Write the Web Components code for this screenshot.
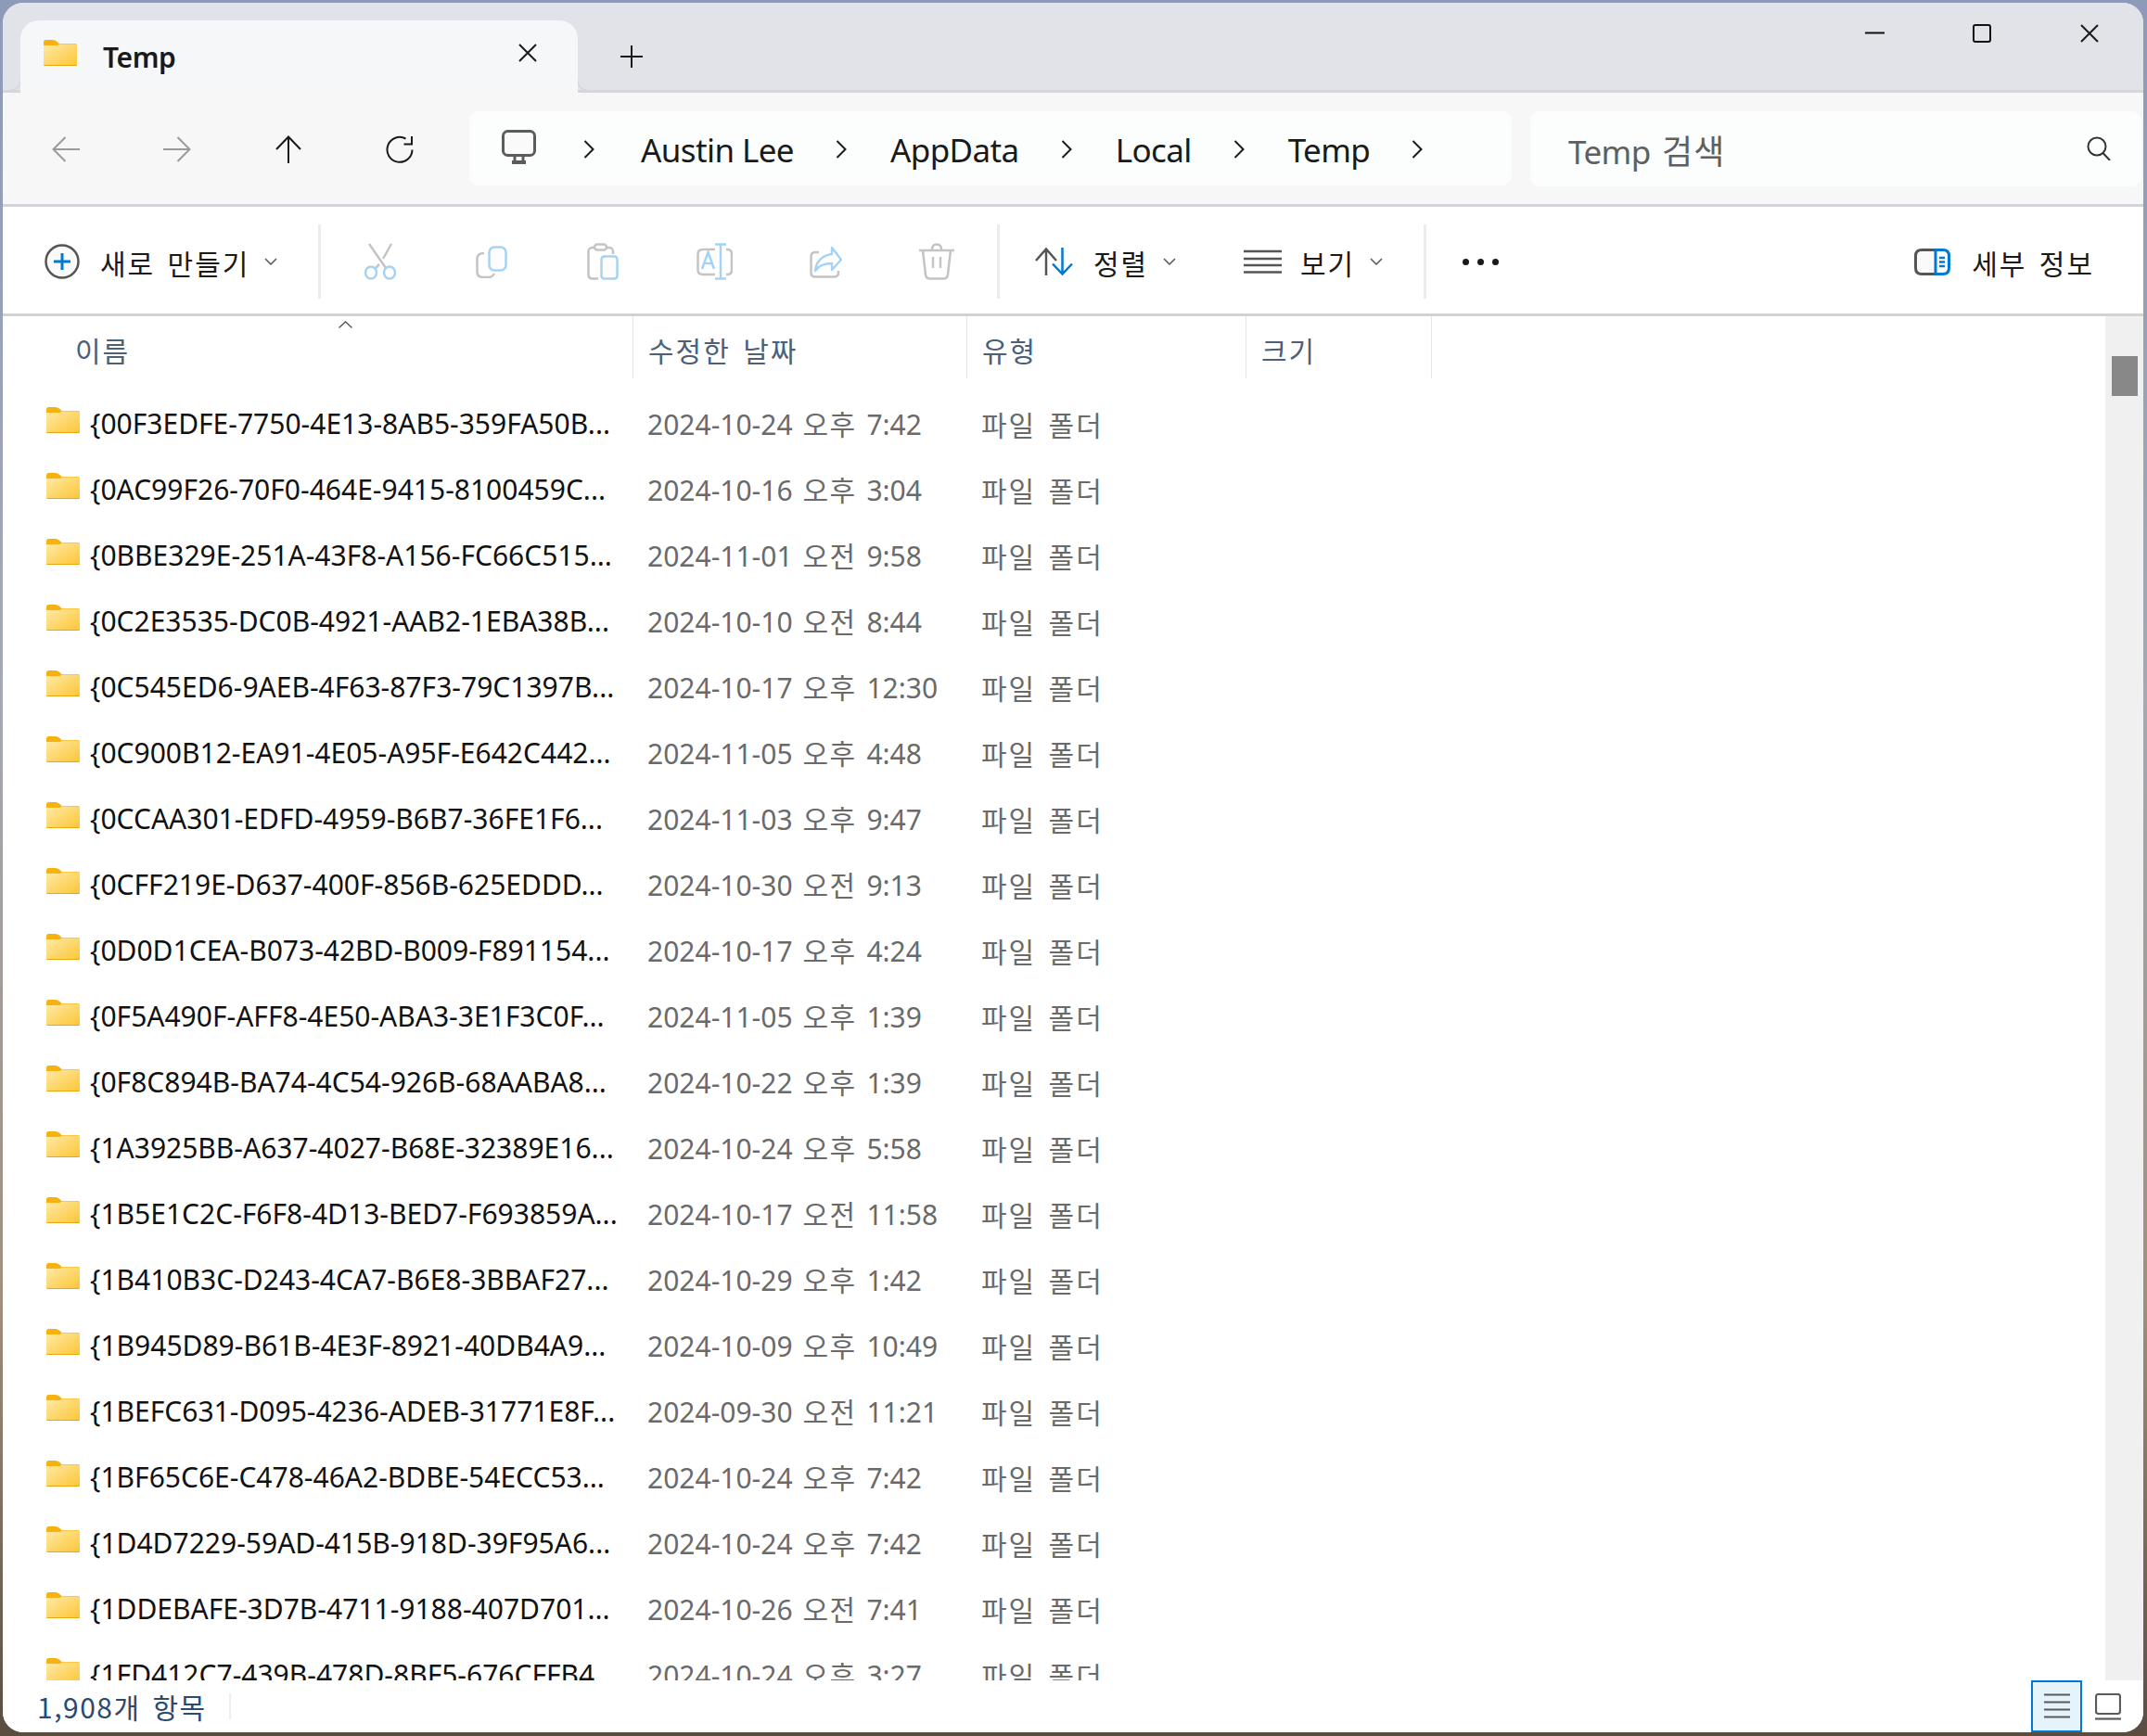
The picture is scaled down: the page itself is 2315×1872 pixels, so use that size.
<!DOCTYPE html>
<html lang="ko"><head><meta charset="utf-8"><title>Temp</title>
<style>
html,body{margin:0;padding:0;height:100%}
body{width:2315px;height:1872px;box-sizing:border-box;padding:3px 3px 4px 3px;overflow:hidden;
background:linear-gradient(to bottom,#8d9bb8 0,#a4a9b4 40%,#a08f7c 75%,#5a4d40 100%);
font-family:"Noto Sans","Noto Sans CJK KR",sans-serif;}
</style></head><body>
<fe-window></fe-window>
<script>
const FONT='"Noto Sans","Noto Sans CJK KR",sans-serif';
const KFONT='"Noto Sans CJK KR","Noto Sans",sans-serif';
const G='#c4c4c4',B='#a6d3f4';
const svg=(w,h,body,extra='')=>`<svg xmlns="http://www.w3.org/2000/svg" width="${w}" height="${h}" viewBox="0 0 ${w} ${h}" fill="none" ${extra} style="display:block;flex:none">${body}</svg>`;
const ICONS={
 folder:()=>svg(36,28,`<defs><linearGradient id="f" x1="0" y1="0" x2="1" y2="1"><stop offset="0" stop-color="#ffeaa6"/><stop offset="1" stop-color="#fcc535"/></linearGradient></defs><path d="M0 2.5Q0 0 2.5 0H10Q13 0 15 2.5L16.500 4H34Q36 4 36 6V9H0Z" fill="#f6b211"/><path d="M0 6H14.500L17 4.500H34.500Q36 4.500 36 6V26.500Q36 28 34.500 28H1.500Q0 28 0 26.500Z" fill="url(#f)"/><path d="M0 27H36V26.500Q36 28 34.500 28H1.500Q0 28 0 26.500Z" fill="#e9a90e"/>`),
 x:(c='#1a1a1a')=>svg(20,20,`<path d="M1 1L19 19M19 1L1 19" stroke="${c}" stroke-width="2"/>`),
 plus:()=>svg(24,24,`<path d="M12 0V24M0 12H24" stroke="#1a1a1a" stroke-width="2"/>`),
 back:()=>svg(30,28,`<path d="M30 14H1.500M14.500 1L1.500 14L14.500 27" stroke="#9a9a9a" stroke-width="2"/>`),
 fwd:()=>svg(30,28,`<path d="M0 14H28.500M15.500 1L28.500 14L15.500 27" stroke="#9a9a9a" stroke-width="2"/>`),
 up:()=>svg(28,30,`<path d="M14 30V1.500M1 15L14 1.500L27 15" stroke="#1a1a1a" stroke-width="2"/>`),
 refresh:()=>svg(30,30,`<path d="M28.500 15.500A13.500 13.500 0 1 1 21.500 3.500" stroke="#1a1a1a" stroke-width="2"/><path d="M28 1V9.500H19.500" stroke="#1a1a1a" stroke-width="2"/>`),
 monitor:()=>svg(37,37,`<rect x="1.500" y="1.500" width="34" height="26" rx="5" fill="#fafafa" stroke="#5c5c5c" stroke-width="3"/><path d="M14 28V34M23 28V34" stroke="#5c5c5c" stroke-width="3"/><path d="M11 35H26" stroke="#5c5c5c" stroke-width="4"/>`),
 crumb:()=>svg(12,20,`<path d="M1.500 1L10.500 10L1.500 19" stroke="#1a1a1a" stroke-width="2"/>`),
 search:()=>svg(26,26,`<circle cx="11" cy="11" r="9.500" stroke="#333" stroke-width="2"/><path d="M17.500 18L25 26" stroke="#333" stroke-width="2"/>`),
 min:()=>svg(21,3,`<path d="M0 1.500H21" stroke="#111" stroke-width="2"/>`),
 max:()=>svg(20,20,`<rect x="1" y="1" width="18" height="18" rx="2" stroke="#111" stroke-width="2"/>`),
 newc:()=>svg(38,38,`<circle cx="19" cy="19" r="17.500" fill="#fafafa" stroke="#555" stroke-width="2.500"/><path d="M19 10V28M10 19H28" stroke="#0078d4" stroke-width="3"/>`),
 chev:()=>svg(14,8,`<path d="M1 1L7 7L13 1" stroke="#555" stroke-width="1.500"/>`),
 cut:()=>svg(36,40,`<path d="M6 1L24 27M30 1L21 17M17 23L12 28" stroke="${G}" stroke-width="2.500"/><ellipse cx="8" cy="32" rx="6" ry="6.500" stroke="${B}" stroke-width="2.500"/><ellipse cx="28" cy="32" rx="6" ry="6.500" stroke="${B}" stroke-width="2.500"/>`),
 copy:()=>svg(34,35,`<path d="M9 8C4 8 1.500 10 1.500 14V28C1.500 32 4 34 8 34H14C17 34 19 32 20 30" stroke="${G}" stroke-width="2.500"/><rect x="14.500" y="1.500" width="18" height="25" rx="5.500" fill="#fdfdfd" stroke="${B}" stroke-width="2.500"/>`),
 paste:()=>svg(34,40,`<path d="M8 5H5.500C3 5 1.500 7 1.500 9V34C1.500 37 3 38.500 6 38.500H12M21 5H24C26.500 5 28 7 28 9V12" stroke="${G}" stroke-width="2.500"/><rect x="8" y="1.500" width="13" height="6" rx="3" stroke="${G}" stroke-width="2.500"/><rect x="15.500" y="14.500" width="17" height="24" rx="3" fill="#fdfdfd" stroke="${B}" stroke-width="2.500"/>`),
 rename:()=>svg(39,40,`<path d="M20 7H7Q1.500 7 1.500 12V29Q1.500 34 7 34H20M32 7H33Q38 7 38 12V29Q38 34 33 34H32" stroke="${G}" stroke-width="2.500"/><path d="M26 2V38M20 1.500H32M20 38.500H32M6 28L12.500 10L19 28M8.500 22H16.500" stroke="${B}" stroke-width="2.500"/>`),
 share:()=>svg(35,35,`<path d="M10 7H6Q1.500 7 1.500 12V29Q1.500 33.500 6 33.500H26Q31 33.500 31 29V27" stroke="${G}" stroke-width="2.500"/><path d="M24 2L34 15L24 26V19C16 19 10 21 6 27C7 17 14 10 24 9Z" fill="#fff" stroke="${B}" stroke-width="2.500" stroke-linejoin="round"/>`),
 del:()=>svg(38,40,`<path d="M0 8H38M14 7C14 3 16 1.500 19 1.500C22 1.500 24 3 24 7M4 8L7 34Q7.500 38.500 12 38.500H26Q30.500 38.500 31 34L34 8M15 15V27M23 15V27" stroke="${G}" stroke-width="2.500"/>`),
 sort:()=>svg(41,30,`<path d="M12 30V1.500M1 14L12 1.500L23 14" stroke="#555" stroke-width="2.500"/><path d="M29.500 0V28M19 17.500L29.500 28.500L40 17.500" stroke="#0078d4" stroke-width="2.500"/>`),
 view:()=>svg(41,26,`<path d="M0 2H41M0 10H41M0 17H41M0 24.500H41" stroke="#555" stroke-width="2.500"/>`),
 details:()=>svg(39,29,`<path d="M23 1.500H8Q1.500 1.500 1.500 8V21Q1.500 27.500 8 27.500H23" fill="#fafafa" stroke="#555" stroke-width="3"/><path d="M23 1.500H31Q37.500 1.500 37.500 8V21Q37.500 27.500 31 27.500H23Z" fill="#fff" stroke="#0078d4" stroke-width="3"/><path d="M27 10H33M27 14.500H33M27 19H33" stroke="#0078d4" stroke-width="2.500"/>`),
 caret:()=>svg(15,8,`<path d="M.5 7.500L7.500 1L14.500 7.500" stroke="#555" stroke-width="1.300"/>`),
 list:()=>svg(28,28,`<path d="M0 1.500H28M0 9.500H28M0 17.500H28M0 25.500H28" stroke="#5a5a5a" stroke-width="2.200"/>`),
 thumb:()=>svg(28,29,`<rect x="1" y="1" width="26" height="21" rx="2.500" stroke="#5a5a5a" stroke-width="2.200"/><path d="M0 27.500H28" stroke="#5a5a5a" stroke-width="2.200"/>`),
};
class Base extends HTMLElement{
 constructor(){super();this.attachShadow({mode:'open'});}
 connectedCallback(){this.shadowRoot.innerHTML=this.render();}
 a(n,d=''){return this.getAttribute(n)??d;}
}
const def=(n,c)=>customElements.define(n,c);

def('fe-icon',class extends Base{render(){return `<style>:host{display:block;flex:none}</style>${ICONS[this.a('name')]()}`}});

def('fe-tab',class extends Base{render(){return `<style>
:host{position:relative;display:flex;align-items:center;box-sizing:border-box;width:601px;height:78px;background:#f6f7f9;border-radius:20px 20px 0 0;padding:0 44px 0 25px;font:600 30px ${FONT};letter-spacing:-.4px;color:#1a1a1a}
:host::before,:host::after{content:"";position:absolute;bottom:3px;width:10px;height:10px}
:host::before{left:-10px;background:radial-gradient(circle at 0 0,#e1e3e8 9px,#d5d6da 9.500px,#d5d6da 10.500px,transparent 11px)}
:host::after{right:-10px;background:radial-gradient(circle at 100% 0,#e1e3e8 9px,#d5d6da 9.500px,#d5d6da 10.500px,transparent 11px)}
.t{margin-left:28px;flex:1;line-height:1;margin-top:2px}
</style><fe-icon name="folder" style="margin-top:-8px"></fe-icon><span class="t"><slot></slot></span><fe-icon name="x" style="margin-top:-8px"></fe-icon>`}});

def('fe-titlebar',class extends Base{render(){return `<style>
:host{display:flex;box-sizing:border-box;height:97px;background:#e1e3e8;border-bottom:3px solid #d5d6da;padding:19px 0 0 19px}
.tab{margin-bottom:-3px}
.add{margin:27px 0 0 46px}
.wc{margin-left:auto;display:flex;margin-top:-19px;height:78px}
.b{display:flex;justify-content:center}
</style><fe-tab class="tab">Temp</fe-tab><fe-icon class="add" name="plus"></fe-icon>
<div class="wc"><div class="b" style="width:116px;padding-top:31px"><fe-icon name="min"></fe-icon></div>
<div class="b" style="width:116px;padding-top:23px"><fe-icon name="max"></fe-icon></div>
<div class="b" style="width:116px;padding-top:23px"><fe-icon name="x"></fe-icon></div></div>`}});

def('fe-crumb',class extends Base{render(){return `<style>
:host{display:flex;align-items:center;gap:45px;margin-right:47px;font:400 35px/1 ${FONT};letter-spacing:-.6px;color:#1a1a1a}
span{margin-top:2px}
fe-icon{margin-top:2px}
</style><span><slot></slot></span><fe-icon name="crumb"></fe-icon>`}});

def('fe-navbar',class extends Base{render(){return `<style>
:host{display:flex;align-items:center;box-sizing:border-box;height:123px;background:#f7f7f7;border-bottom:3px solid #d2d3d8;padding:0 2px 0 8px}
.n{flex:0 0 120px;display:flex;justify-content:center;margin-top:2px}
.addr{flex:0 0 1124px;margin-left:15px;box-sizing:border-box;height:80px;background:#fcfefd;border-radius:11px;display:flex;align-items:center;padding-left:32px}
.mon{margin-right:51px;margin-left:3px;margin-top:-4px}
.first{margin-right:50px;margin-top:2px}
.search{flex:0 0 659px;margin-left:20px;box-sizing:border-box;height:81px;background:#fcfefd;border-radius:11px;display:flex;align-items:center;padding:0 33px 0 41px;font:400 35px/1 ${FONT};color:#5f5f5f;letter-spacing:-.6px;word-spacing:4px}
.search span.w{flex:1;margin-top:3px}
.k{font-family:${KFONT};font-size:36px;letter-spacing:1px}
</style>
<div class="n"><fe-icon name="back"></fe-icon></div><div class="n"><fe-icon name="fwd"></fe-icon></div><div class="n"><fe-icon name="up"></fe-icon></div><div class="n"><fe-icon name="refresh"></fe-icon></div>
<div class="addr"><fe-icon class="mon" name="monitor"></fe-icon><fe-icon class="first" name="crumb"></fe-icon><fe-crumb>Austin Lee</fe-crumb><fe-crumb>AppData</fe-crumb><fe-crumb>Local</fe-crumb><fe-crumb>Temp</fe-crumb></div>
<div class="search"><span class="w">Temp <span class="k">검색</span></span><fe-icon name="search"></fe-icon></div>`}});

def('fe-cmd',class extends Base{render(){const chev=this.hasAttribute('menu');const gap=this.a('gap','22');return `<style>
:host{display:flex;align-items:center;flex:none;font:400 30px/1 ${KFONT};color:#1a1a1a;letter-spacing:2px;word-spacing:3px}
.l{margin-left:${gap}px;margin-top:2px;white-space:pre}
.c{margin-left:16px}
</style><fe-icon name="${this.a('icon')}"></fe-icon><span class="l"><slot></slot></span>${chev?'<fe-icon class="c" name="chev"></fe-icon>':''}`}});

def('fe-cmdbar',class extends Base{render(){return `<style>
:host{display:flex;align-items:center;box-sizing:border-box;height:118px;background:#fff;border-bottom:3px solid #d2d2d2;padding:3px 53px 0 45px}
.s{flex:none;width:3px;height:80px;background:#ececec}
.i{flex:0 0 120px;display:flex;justify-content:center}
.dots{display:flex;gap:9px;margin-left:39px}
.dots i{width:7px;height:7px;border-radius:50%;background:#1a1a1a;display:block}
.r{margin-left:auto}
</style>
<fe-cmd icon="newc" menu gap="22" style="width:295px">새로 만들기</fe-cmd><div class="s"></div>
<div style="width:4px"></div>
<div class="i"><fe-icon name="cut"></fe-icon></div><div class="i"><fe-icon name="copy"></fe-icon></div><div class="i"><fe-icon name="paste"></fe-icon></div><div class="i"><fe-icon name="rename"></fe-icon></div><div class="i"><fe-icon name="share"></fe-icon></div><div class="i"><fe-icon name="del"></fe-icon></div>
<div style="width:5px"></div><div class="s"></div>
<fe-cmd icon="sort" menu gap="22" style="width:225px;margin-left:38px">정렬</fe-cmd>
<fe-cmd icon="view" menu gap="20" style="width:194px">보기</fe-cmd><div class="s"></div>
<div class="dots"><i></i><i></i><i></i></div>
<fe-cmd class="r" icon="details" gap="23">세부 정보</fe-cmd>`}});

def('fe-header',class extends Base{render(){return `<style>
:host{position:relative;display:flex;flex:none;height:67px;font:400 30px/1 ${KFONT};color:#4c607a;letter-spacing:2px;word-spacing:3px;margin-bottom:13px}
.h{box-sizing:border-box;border-right:1px solid #e5e5e5;display:flex;align-items:center;padding-left:16px;padding-top:5px}
.h:first-of-type{padding-left:78px}
.caret{position:absolute;left:362px;top:5px}
</style>
<div class="h" style="width:680px">이름</div><div class="h" style="width:360px">수정한 날짜</div><div class="h" style="width:301px">유형</div><div class="h" style="width:200px">크기</div>
<fe-icon class="caret" name="caret"></fe-icon>`}});

def('fe-row',class extends Base{render(){return `<style>
:host{display:grid;grid-template-columns:36px 612px 360px 1fr;align-items:center;height:71px;padding-left:47px;flex:none;font:400 30px/1 ${FONT};color:#111;white-space:nowrap}
.n{padding-left:11px}
.o{color:#6a6a6a;word-spacing:3px}
.ic{margin-top:-7px}
.k{font-family:${KFONT};letter-spacing:1.500px}
.t{font-family:${KFONT};letter-spacing:2px}
</style><fe-icon class="ic" name="folder"></fe-icon><div class="n">${this.a('name')}</div><div class="o">${this.a('date').replace(/(오[전후])/,'<span class="k">$1</span>')}</div><div class="o t">파일 폴더</div>`}});

const DATA=[
['{00F3EDFE-7750-4E13-8AB5-359FA50B...','2024-10-24 오후 7:42'],
['{0AC99F26-70F0-464E-9415-8100459C...','2024-10-16 오후 3:04'],
['{0BBE329E-251A-43F8-A156-FC66C515...','2024-11-01 오전 9:58'],
['{0C2E3535-DC0B-4921-AAB2-1EBA38B...','2024-10-10 오전 8:44'],
['{0C545ED6-9AEB-4F63-87F3-79C1397B...','2024-10-17 오후 12:30'],
['{0C900B12-EA91-4E05-A95F-E642C442...','2024-11-05 오후 4:48'],
['{0CCAA301-EDFD-4959-B6B7-36FE1F6...','2024-11-03 오후 9:47'],
['{0CFF219E-D637-400F-856B-625EDDD...','2024-10-30 오전 9:13'],
['{0D0D1CEA-B073-42BD-B009-F891154...','2024-10-17 오후 4:24'],
['{0F5A490F-AFF8-4E50-ABA3-3E1F3C0F...','2024-11-05 오후 1:39'],
['{0F8C894B-BA74-4C54-926B-68AABA8...','2024-10-22 오후 1:39'],
['{1A3925BB-A637-4027-B68E-32389E16...','2024-10-24 오후 5:58'],
['{1B5E1C2C-F6F8-4D13-BED7-F693859A...','2024-10-17 오전 11:58'],
['{1B410B3C-D243-4CA7-B6E8-3BBAF27...','2024-10-29 오후 1:42'],
['{1B945D89-B61B-4E3F-8921-40DB4A9...','2024-10-09 오후 10:49'],
['{1BEFC631-D095-4236-ADEB-31771E8F...','2024-09-30 오전 11:21'],
['{1BF65C6E-C478-46A2-BDBE-54ECC53...','2024-10-24 오후 7:42'],
['{1D4D7229-59AD-415B-918D-39F95A6...','2024-10-24 오후 7:42'],
['{1DDEBAFE-3D7B-4711-9188-407D701...','2024-10-26 오전 7:41'],
['{1FD412C7-439B-478D-8BF5-676CFFB4','2024-10-24 오후 3:27'],
];
def('fe-list',class extends Base{render(){return `<style>
:host{display:flex;flex:none;height:1471px;background:#fff;overflow:hidden}
.m{flex:1;min-width:0;display:flex;flex-direction:column;overflow:hidden}
.sb{flex:0 0 41px;background:#f0f0f0}
.th{width:28px;height:43px;margin:43px 0 0 7px;background:#888}
</style><div class="m"><fe-header></fe-header>${DATA.map(d=>`<fe-row name="${d[0]}" date="${d[1]}"></fe-row>`).join('')}</div><div class="sb"><div class="th"></div></div>`}});

def('fe-status',class extends Base{render(){return `<style>
:host{display:flex;align-items:center;flex:1;min-height:0;background:#fff;padding-left:37px;font:400 30px/1 ${KFONT};color:#2a4a6e;letter-spacing:1.500px;word-spacing:3px}
.s{width:2px;height:28px;background:#eee;margin-left:24px}
.v{margin-left:auto;display:flex;align-self:stretch;align-items:center;padding-right:24px}
.on{box-sizing:border-box;width:55px;height:100%;background:#e5f3fb;border:2px solid #0078d4;display:flex;align-items:center;justify-content:center;margin-right:14px}
</style><span>1,908개 항목</span><div class="s"></div><div class="v"><div class="on"><fe-icon name="list"></fe-icon></div><fe-icon name="thumb"></fe-icon></div>`}});

def('fe-window',class extends Base{render(){return `<style>
:host{display:flex;flex-direction:column;width:2308px;height:1865px;border-radius:22px;overflow:hidden;background:#fff}
</style><fe-titlebar></fe-titlebar><fe-navbar></fe-navbar><fe-cmdbar></fe-cmdbar><fe-list></fe-list><fe-status></fe-status>`}});
</script>
</body></html>
